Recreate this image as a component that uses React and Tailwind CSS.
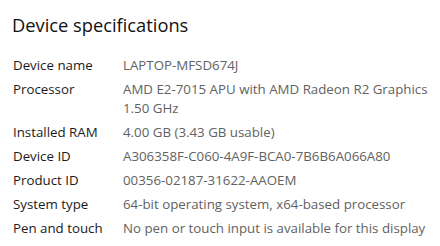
const SPECS = [
    ['Device name', ['LAPTOP-MFSD674J']],
    ['Processor', ['AMD E2-7015 APU with AMD Radeon R2 Graphics', '1.50 GHz']],
    ['Installed RAM', ['4.00 GB (3.43 GB usable)']],
    ['Device ID', ['A306358F-C060-4A9F-BCA0-7B6B6A066A80']],
    ['Product ID', ['00356-02187-31622-AAOEM']],
    ['System type', ['64-bit operating system, x64-based processor']],
    ['Pen and touch', ['No pen or touch input is available for this display']],
];

export default function App() {
    return (
        <div className="w-[440px] h-[246px] bg-white overflow-hidden pl-[12px] pt-[11px] font-['Open_Sans',sans-serif]">
            <h1 className="text-[18.3px] leading-[27px] text-[#111] font-normal">Device specifications</h1>

            <div className="mt-[18px] grid grid-cols-[111px_1fr] gap-y-[5px] text-[13.3px] leading-[19px]">
                {SPECS.map(([label, lines]) => (
                    <div key={label} className="contents">
                        <div className="pl-px text-[#1b1b1b]">{label}</div>
                        <div className="text-[#626262]">
                            {lines.map(l => <div key={l}>{l}</div>)}
                        </div>
                    </div>
                ))}
            </div>
        </div>
    );
}
